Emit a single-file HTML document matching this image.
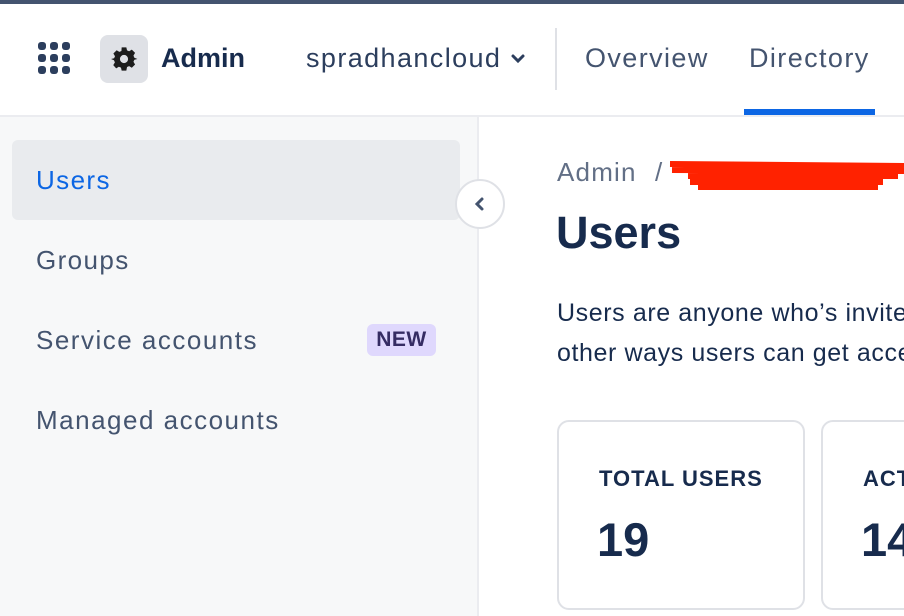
<!DOCTYPE html>
<html><head><style>
*{margin:0;padding:0;box-sizing:border-box}
html,body{width:904px;height:616px;overflow:hidden}
body{background:#fff;font-family:"Liberation Sans",Arial,sans-serif;position:relative}
.abs{position:absolute}
.ls{letter-spacing:1.4px}
</style></head><body>
<div class="abs" style="left:0;top:0;width:904px;height:4px;background:#44546f"></div>
<div class="abs" style="left:0;top:115px;width:904px;height:2px;background:#ebecf0"></div>
<svg class="abs" style="left:38px;top:42px" width="34" height="34" viewBox="0 0 34 34" fill="#2c3e5d">
<rect x="0" y="0" width="8" height="8" rx="3"/><rect x="12" y="0" width="8" height="8" rx="3"/><rect x="24" y="0" width="8" height="8" rx="3"/>
<rect x="0" y="12" width="8" height="8" rx="3"/><rect x="12" y="12" width="8" height="8" rx="3"/><rect x="24" y="12" width="8" height="8" rx="3"/>
<rect x="0" y="24" width="8" height="8" rx="3"/><rect x="12" y="24" width="8" height="8" rx="3"/><rect x="24" y="24" width="8" height="8" rx="3"/>
</svg>
<div class="abs" style="left:100px;top:35px;width:48px;height:48px;border-radius:8px;background:#dfe1e6"></div>
<svg class="abs" style="left:110px;top:45px" width="28" height="28" viewBox="0 0 24 24"><path fill="#1d1d1d" d="M10 2h4l.6 2.6 1.8.8 2.3-1.4 2.8 2.8-1.4 2.3.8 1.8L23.5 12v0l-2.6.6-.8 1.8 1.4 2.3-2.8 2.8-2.3-1.4-1.8.8L14 22h-4l-.6-2.6-1.8-.8-2.3 1.4-2.5-2.8 1.4-2.3-.8-1.8L.9 12l2.6-.6.8-1.8L2.9 7.3 5.7 4.5 8 5.9l1.8-.8z M12 8.5a3.5 3.5 0 1 0 0 7 3.5 3.5 0 0 0 0-7z" fill-rule="evenodd"/></svg>
<div class="abs" style="left:161px;top:43px;font-size:27px;font-weight:bold;color:#172b4d">Admin</div>
<div class="abs ls" style="left:306px;top:43px;font-size:27px;color:#2c3e5d">spradhancloud</div>
<svg class="abs" style="left:510px;top:53px" width="16" height="12" viewBox="0 0 16 12"><path d="M3 3l5 5 5-5" stroke="#2c3e5d" stroke-width="3" fill="none" stroke-linecap="round"/></svg>
<div class="abs" style="left:555px;top:28px;width:2px;height:62px;background:#dfe1e6"></div>
<div class="abs ls" style="left:585px;top:43px;font-size:27px;color:#44546f">Overview</div>
<div class="abs ls" style="left:749px;top:43px;font-size:27px;color:#44546f">Directory</div>
<div class="abs" style="left:744px;top:109px;width:131px;height:6px;background:#0c66e4"></div>
<div class="abs" style="left:0;top:117px;width:479px;height:499px;background:#f7f8f9;border-right:2px solid #ebecf0"></div>
<div class="abs" style="left:12px;top:140px;width:448px;height:80px;border-radius:6px;background:#e9ebee"></div>
<div class="abs ls" style="left:36px;top:165px;font-size:26px;color:#0c66e4">Users</div>
<div class="abs ls" style="left:36px;top:245px;font-size:26px;color:#44546f">Groups</div>
<div class="abs" style="left:36px;top:325px;font-size:26px;color:#44546f;letter-spacing:1.5px">Service accounts</div>
<div class="abs" style="left:367px;top:324px;width:69px;height:32px;border-radius:6px;background:#dfd8fd;color:#352c63;font-weight:bold;font-size:21px;text-align:center;line-height:32px;letter-spacing:.5px">NEW</div>
<div class="abs" style="left:36px;top:405px;font-size:26px;color:#44546f;letter-spacing:1.5px">Managed accounts</div>
<div class="abs" style="left:455px;top:179px;width:50px;height:50px;border-radius:50%;background:#fff;border:2px solid #dfe1e6"></div>
<svg class="abs" style="left:470px;top:194px" width="20" height="20" viewBox="0 0 20 20"><path d="M12 5l-5 5 5 5" stroke="#44546f" stroke-width="3" fill="none" stroke-linecap="round"/></svg>
<div class="abs" style="left:557px;top:157px;font-size:26px;color:#626f86;letter-spacing:1.2px">Admin</div>
<div class="abs" style="left:655px;top:157px;font-size:26px;color:#626f86">/</div>
<svg class="abs" style="left:668px;top:158px" width="236" height="36"><path d="M2 6 L236 8 M4 12 L236 13 M20 18 L230 18 M22 24 L215 24 M30 29 L210 29" stroke="#ff2200" stroke-width="6" fill="none"/></svg>
<div class="abs" style="left:556px;top:207px;font-size:45px;font-weight:bold;color:#172b4d">Users</div>
<div class="abs" style="left:557px;top:293px;width:347px;height:90px;overflow:hidden">
<div style="font-size:25px;color:#172b4d;line-height:40px;white-space:nowrap;letter-spacing:.6px">Users are anyone who’s invited to your organization and<br>other ways users can get access to products</div></div>
<div class="abs" style="left:557px;top:420px;width:248px;height:190px;border:2px solid #dfe1e6;border-radius:12px;background:#fff"></div>
<div class="abs" style="left:599px;top:466px;font-size:22px;font-weight:bold;color:#172b4d;letter-spacing:1px">TOTAL USERS</div>
<div class="abs" style="left:597px;top:512px;font-size:47px;font-weight:bold;color:#172b4d">19</div>
<div class="abs" style="left:821px;top:420px;width:83px;height:196px;overflow:hidden">
<div style="position:absolute;left:0;top:0;width:200px;height:190px;border:2px solid #dfe1e6;border-radius:12px;background:#fff"></div>
<div style="position:absolute;left:42px;top:46px;font-size:22px;font-weight:bold;color:#172b4d;letter-spacing:1px">ACTIVE</div>
<div style="position:absolute;left:40px;top:92px;font-size:47px;font-weight:bold;color:#172b4d">14</div>
</div>
</body></html>
